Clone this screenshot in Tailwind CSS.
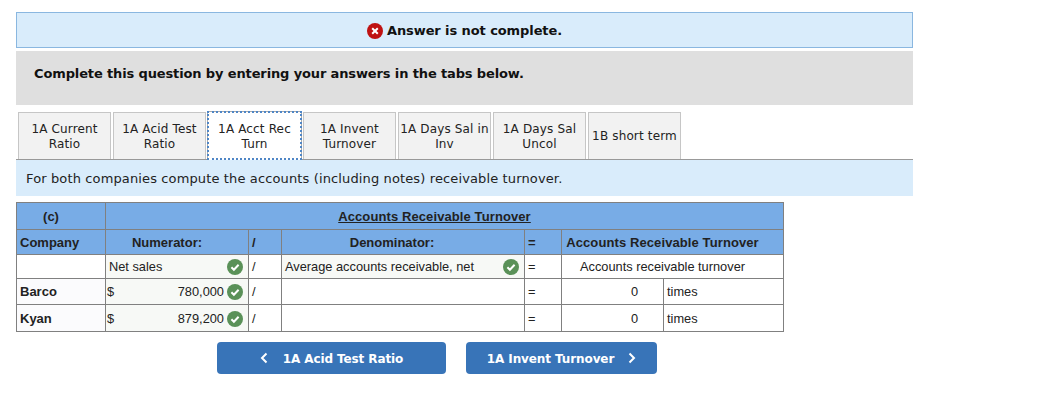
<!DOCTYPE html>
<html lang="en">
<head>
  <meta charset="UTF-8" />
  <title>Answer is not complete</title>
  <script src="https://cdn.jsdelivr.net/npm/@tailwindcss/browser@4"></script>
</head>
<body class="bg-white font-['DejaVu_Sans',sans-serif] text-[13px] text-[#222]">
  <div class="w-[897px] ml-4 pt-3">
    <!-- status -->
    <div class="h-9 pt-0.5 bg-[#d9ecfb] border border-[#8ab7e0] flex items-center justify-center gap-1 font-bold tracking-[-0.09px] text-[#111]">
      <svg class="w-4 h-4" viewBox="0 0 16 16"><circle cx="8" cy="8" r="8" fill="#bf1212"/><path d="M5.2 5.2l5.6 5.6M10.8 5.2l-5.6 5.6" stroke="#fff" stroke-width="2" fill="none"/></svg>
      <span>Answer is not complete.</span>
    </div>
    <div class="h-[54px] mt-[3px] bg-[#dfdfdf] pl-[18px] pt-[13px] font-bold tracking-[-0.13px] text-[#111]">Complete this question by entering your answers in the tabs below.</div>

    <!-- tabs -->
    <div class="flex gap-0.5 mt-[7px] pl-0.5 h-[47px] text-[12px] tracking-[0.15px] leading-[15px] text-[#222]">
      <div class="w-[93px] pt-px border border-b-0 border-[#c6c6c6] bg-[#f2f2f2] flex items-center justify-center text-center">1A Current<br>Ratio</div>
      <div class="w-[93px] pt-px border border-b-0 border-[#c6c6c6] bg-[#f2f2f2] flex items-center justify-center text-center">1A Acid Test<br>Ratio</div>
      <div class="w-[95px] -mx-px -mt-px relative border border-b-0 border-[#aaa] bg-white flex items-center justify-center text-center pt-px outline-2 outline-dotted outline-[#4f86c6] -outline-offset-2 h-[49px]">1A Acct Rec<br>Turn</div>
      <div class="w-[93px] pt-px border border-b-0 border-[#c6c6c6] bg-[#f2f2f2] flex items-center justify-center text-center">1A Invent<br>Turnover</div>
      <div class="w-[93px] pt-px border border-b-0 border-[#c6c6c6] bg-[#f2f2f2] flex items-center justify-center text-center">1A Days Sal in<br>Inv</div>
      <div class="w-[93px] pt-px border border-b-0 border-[#c6c6c6] bg-[#f2f2f2] flex items-center justify-center text-center">1A Days Sal<br>Uncol</div>
      <div class="w-[93px] pt-px border border-b-0 border-[#c6c6c6] bg-[#f2f2f2] flex items-center justify-center text-center">1B short term</div>
    </div>
    <div class="h-[37px] pt-0.5 border-t border-[#999] bg-[#d9ecfb] pl-[10px] flex items-center tracking-[0.13px] text-[#222]">For both companies compute the accounts (including notes) receivable turnover.</div>

    <!-- table -->
    <table class="mt-[6px] w-[767px] table-fixed border-collapse font-['Liberation_Sans',sans-serif] text-[12.8px] text-[#222]">
      <colgroup>
        <col class="w-[89px]"><col class="w-[143px]"><col class="w-[33px]"><col class="w-[243px]"><col class="w-[37px]"><col class="w-[102px]"><col class="w-[120px]">
      </colgroup>
      <tr class="h-[27px] bg-[#78ace6] font-bold text-[13px]">
        <td class="border border-[#808080] text-center pr-5 pt-px">(c)</td>
        <td colspan="6" class="border border-[#808080] text-center underline pr-5 pt-px tracking-[0.1px]">Accounts Receivable Turnover</td>
      </tr>
      <tr class="h-[25px] bg-[#78ace6] font-bold text-[13px]">
        <td class="border border-[#808080] pl-[3px] pt-px">Company</td>
        <td class="border border-[#808080] text-center pr-5 pt-px">Numerator:</td>
        <td class="border border-[#808080] pl-[3px] pt-px">/</td>
        <td class="border border-[#808080] text-center pr-[22px] pt-px">Denominator:</td>
        <td class="border border-[#808080] pl-[3px] pt-px">=</td>
        <td colspan="2" class="border border-[#808080] text-center pr-5 pt-px tracking-[0.1px]">Accounts Receivable Turnover</td>
      </tr>
      <tr class="h-[24px]">
        <td class="border border-[#808080]"></td>
        <td class="border border-[#808080] bg-[#f7f9f6] pl-[3px] pr-[5px]">
          <div class="flex items-center justify-between">Net sales
            <svg class="w-4 h-4" viewBox="0 0 16 16"><circle cx="8" cy="8" r="8" fill="#5a9158"/><path d="M4.4 8.2l2.5 2.5 4.7-4.9" stroke="#fff" stroke-width="2" fill="none"/></svg>
          </div>
        </td>
        <td class="border border-[#808080] pl-[3px]">/</td>
        <td class="border border-[#808080] bg-[#f7f9f6] pl-[3px] pr-[5px]">
          <div class="flex items-center justify-between">Average accounts receivable, net
            <svg class="w-4 h-4" viewBox="0 0 16 16"><circle cx="8" cy="8" r="8" fill="#5a9158"/><path d="M4.4 8.2l2.5 2.5 4.7-4.9" stroke="#fff" stroke-width="2" fill="none"/></svg>
          </div>
        </td>
        <td class="border border-[#808080] pl-[3px]">=</td>
        <td colspan="2" class="border border-[#808080] text-center pr-5">Accounts receivable turnover</td>
      </tr>
      <tr class="h-[26px]">
        <td class="border border-[#808080] bg-[#fbfbfd] pl-[3px] font-bold text-[13px]">Barco</td>
        <td class="border border-[#808080] bg-[#f7f9f6] pl-[1px] pr-[5px]">
          <div class="flex items-center">$<span class="ml-auto mr-[3px]">780,000</span>
            <svg class="w-4 h-4" viewBox="0 0 16 16"><circle cx="8" cy="8" r="8" fill="#5a9158"/><path d="M4.4 8.2l2.5 2.5 4.7-4.9" stroke="#fff" stroke-width="2" fill="none"/></svg>
          </div>
        </td>
        <td class="border border-[#808080] pl-[3px]">/</td>
        <td class="border border-[#808080]"></td>
        <td class="border border-[#808080] pl-[3px]">=</td>
        <td class="border border-[#808080] text-right pr-[25px]">0</td>
        <td class="border border-[#808080] pl-[3px]">times</td>
      </tr>
      <tr class="h-[27px]">
        <td class="border border-[#808080] bg-[#fbfbfd] pl-[3px] pt-px font-bold text-[13px]">Kyan</td>
        <td class="border border-[#808080] bg-[#f7f9f6] pl-[1px] pr-[5px] pt-px">
          <div class="flex items-center">$<span class="ml-auto mr-[3px]">879,200</span>
            <svg class="w-4 h-4" viewBox="0 0 16 16"><circle cx="8" cy="8" r="8" fill="#5a9158"/><path d="M4.4 8.2l2.5 2.5 4.7-4.9" stroke="#fff" stroke-width="2" fill="none"/></svg>
          </div>
        </td>
        <td class="border border-[#808080] pl-[3px] pt-px">/</td>
        <td class="border border-[#808080]"></td>
        <td class="border border-[#808080] pl-[3px] pt-px">=</td>
        <td class="border border-[#808080] text-right pr-[25px] pt-px">0</td>
        <td class="border border-[#808080] pl-[3px] pt-px">times</td>
      </tr>
    </table>

    <!-- nav buttons -->
    <div class="flex gap-5 mt-[10px] ml-[201px] text-white font-bold text-[12px] tracking-[-0.1px]">
      <button class="w-[229px] h-8 bg-[#3874b8] rounded-sm flex items-center justify-center gap-[15px]">
        <svg class="w-2 h-3" viewBox="0 0 8 12"><path d="M6.5 1.5L2 6l4.5 4.5" stroke="#fff" stroke-width="2" fill="none"/></svg>
        <span class="pt-0.5">1A Acid Test Ratio</span>
      </button>
      <button class="w-[191px] h-8 bg-[#3874b8] rounded-sm flex items-center justify-center gap-[14px]">
        <span class="pt-0.5">1A Invent Turnover</span>
        <svg class="w-2 h-3" viewBox="0 0 8 12"><path d="M1.5 1.5L6 6l-4.5 4.5" stroke="#fff" stroke-width="2" fill="none"/></svg>
      </button>
    </div>
  </div>
</body>
</html>
